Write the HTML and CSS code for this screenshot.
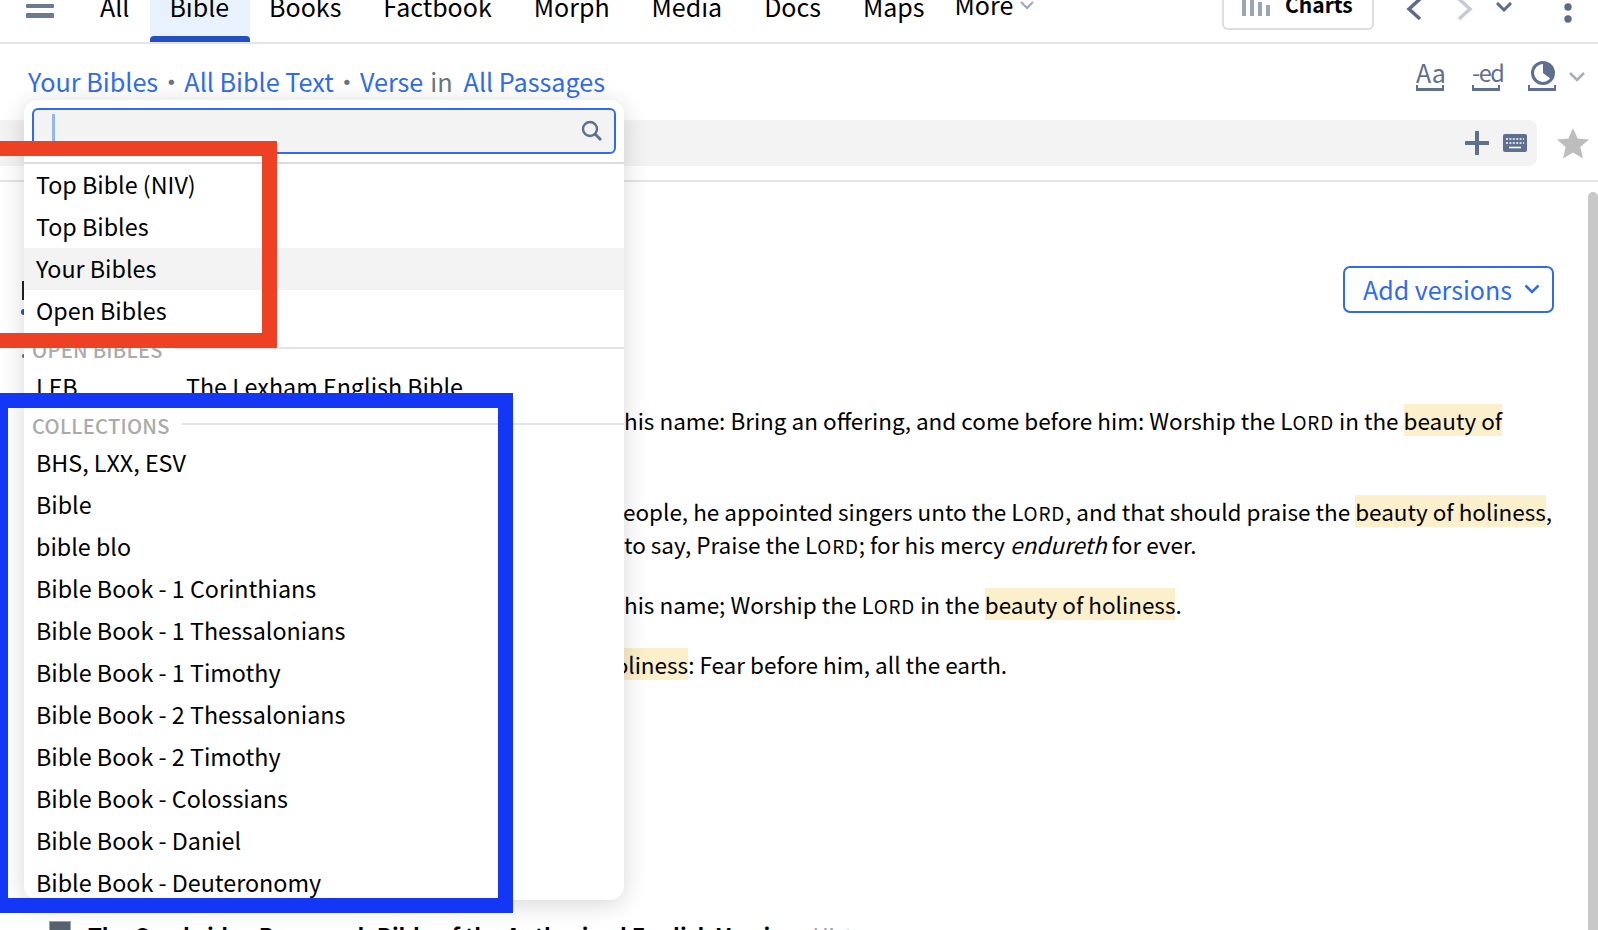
FILE: index.html
```html
<!DOCTYPE html>
<html lang="en">
<head>
<meta charset="utf-8">
<title>Bible search</title>
<link rel="stylesheet" href="styles.css">
</head>
<body>
<div class="page">
  <header class="topbar">
    <svg class="burger" width="28" height="18" viewBox="0 0 28 18"><rect y="0" width="28" height="4" rx="1" fill="#6b7a90"/><rect y="9" width="28" height="5" rx="1" fill="#6b7a90"/></svg>
    <nav class="tabs">
      <a class="tab">All</a>
      <a class="tab active">Bible</a>
      <a class="tab">Books</a>
      <a class="tab">Factbook</a>
      <a class="tab">Morph</a>
      <a class="tab">Media</a>
      <a class="tab">Docs</a>
      <a class="tab">Maps</a>
      <a class="tab more">More <svg width="16" height="10" viewBox="0 0 16 10"><path d="M2 2l6 6 6-6" fill="none" stroke="#9aa5b5" stroke-width="2"/></svg></a>
    </nav>
    <div class="tools">
      <button class="charts">
        <svg width="28" height="20" viewBox="0 0 28 20"><g fill="#9aa5b8"><rect x="0" width="4" height="20"/><rect x="8" width="4" height="20"/><rect x="16" y="6" width="4" height="14"/><rect x="24" y="9" width="4" height="11"/></g></svg>
        <span>Charts</span>
      </button>
      <svg class="back" width="16" height="24" viewBox="0 0 16 24"><path d="M14 2L3 12l11 10" fill="none" stroke="#5f6b85" stroke-width="3.5"/></svg>
      <svg class="fwd" width="16" height="24" viewBox="0 0 16 24"><path d="M2 2l11 10L2 22" fill="none" stroke="#c5cad3" stroke-width="3.5"/></svg>
      <svg class="hist" width="16" height="10" viewBox="0 0 16 10"><path d="M1 1l7 7 7-7" fill="none" stroke="#5f6b85" stroke-width="3"/></svg>
      <svg class="dots" width="8" height="20" viewBox="0 0 8 20"><circle cx="4" cy="4" r="3.7" fill="#5f6b85"/><circle cx="4" cy="16" r="3.7" fill="#5f6b85"/></svg>
    </div>
  </header>

  <section class="crumbs">
    <div class="path">
      <a>Your Bibles</a><i>•</i><a>All Bible Text</a><i>•</i><a>Verse</a><em>in</em><a>All Passages</a>
    </div>
    <div class="prefs">
      <span class="pref">Aa</span>
      <span class="pref ed">-ed</span>
      <span class="pref pie"><svg width="24" height="24" viewBox="0 0 24 24"><circle cx="12" cy="12" r="10.500" fill="#fff" stroke="#5f6f8f" stroke-width="3"/><path d="M12 12V1a11 11 0 0 1 8.500 17.500z" fill="#5f6f8f"/></svg></span>
      <svg class="prefdown" width="16" height="10" viewBox="0 0 16 10"><path d="M1 1l7 7 7-7" fill="none" stroke="#a6aebb" stroke-width="2.500"/></svg>
    </div>
  </section>

  <section class="searchrow">
    <div class="searchbar">
      <svg width="24" height="24" viewBox="0 0 24 24"><path d="M12 1v22M1 12h22" stroke="#5f6f8f" stroke-width="4" stroke-linecap="round"/></svg>
      <svg width="24" height="18" viewBox="0 0 24 18"><rect width="24" height="18" rx="2" fill="#5f6f8f"/><path d="M3 5h18M3 9h18" stroke="#fff" stroke-width="1.600" stroke-dasharray="2 1.400"/><path d="M6 13.500h12" stroke="#fff" stroke-width="1.600"/></svg>
    </div>
    <svg class="star" width="32" height="31" viewBox="0 0 32 31"><path d="M16 0l4.600 10.600 11.400 1-8.700 7.500 2.700 11.400-10-6.100-10 6.100 2.700-11.400L0 11.600l11.400-1z" fill="#bdbdbd"/></svg>
  </section>

  <main class="results">
    <div class="addrow">
      <button class="addversions">Add versions <svg width="16" height="10" viewBox="0 0 16 10"><path d="M1.500 1.500L8 8l6.500-6.500" fill="none" stroke="#2f6bef" stroke-width="2.500"/></svg></button>
    </div>
    <p class="line l1">his name: Bring an offering, and come before him: Worship the L<span class="sc">ORD</span> in the <mark>beauty of</mark></p>
    <p class="line l2">people, he appointed singers unto the L<span class="sc">ORD</span>, and that should praise the <mark>beauty of holiness</mark>,</p>
    <p class="line l3">to say, Praise the L<span class="sc">ORD</span>; for his mercy <i>endureth</i> for ever.</p>
    <p class="line l4">his name; Worship the L<span class="sc">ORD</span> in the <mark>beauty of holiness</mark>.</p>
    <p class="line l5"><mark>holiness</mark>: Fear before him, all the earth.</p>
    <div class="book">
      <span class="cover"></span>
      <b>The Cambridge Paragraph Bible of the Authorized English Version</b>
      <span class="hist-link">Hist</span>
    </div>
  </main>

  <span class="peek bar"></span>
  <span class="peek dot"></span>
  <span class="peek dot2"></span>

  <aside class="popup">
    <div class="inputwrap">
      <div class="input">
        <span class="caret"></span>
        <svg width="22" height="22" viewBox="0 0 22 22"><circle cx="9" cy="9" r="7" fill="none" stroke="#5f6f8f" stroke-width="2.400"/><path d="M14 14l6 6" stroke="#5f6f8f" stroke-width="2.800"/></svg>
      </div>
    </div>
    <ul class="opts first">
      <li>Top Bible (NIV)</li>
      <li>Top Bibles</li>
      <li class="hover">Your Bibles</li>
      <li>Open Bibles</li>
    </ul>
    <h4 class="group open"><span>OPEN BIBLES</span></h4>
    <ul class="opts">
      <li class="pair"><span>LEB</span><span>The Lexham English Bible</span></li>
    </ul>
    <h4 class="group coll"><span>COLLECTIONS</span></h4>
    <ul class="opts">
      <li>BHS, LXX, ESV</li>
      <li>Bible</li>
      <li>bible blo</li>
      <li>Bible Book - 1 Corinthians</li>
      <li>Bible Book - 1 Thessalonians</li>
      <li>Bible Book - 1 Timothy</li>
      <li>Bible Book - 2 Thessalonians</li>
      <li>Bible Book - 2 Timothy</li>
      <li>Bible Book - Colossians</li>
      <li>Bible Book - Daniel</li>
      <li>Bible Book - Deuteronomy</li>
    </ul>
  </aside>

  <div class="mark-red"></div>
  <div class="mark-blue"></div>
</div>
</body>
</html>
```
FILE: styles.css
```css
* { box-sizing: border-box; }
html, body { margin: 0; padding: 0; background: #fff; }
body { font-family: "Noto Sans CJK SC", "Noto Sans", sans-serif; color: #000; overflow: hidden; }
.page { position: relative; width: 1598px; height: 930px; overflow: hidden; background: #fff; }
p, ul, h4 { margin: 0; padding: 0; }
ul { list-style: none; }
button { font: inherit; background: none; cursor: pointer; }

.topbar { height: 44px; border-bottom: 2px solid #e4e4e4; display: flex; align-items: flex-start; padding-left: 26px; position: relative; }
.burger { margin-top: 4px; flex: none; }
.tabs { display: flex; margin-left: 25px; font-size: 25px; line-height: 30px; height: 42px; }
.tab { display: block; padding: 0 21px; margin-top: -9px; height: 51px; color: #000; white-space: nowrap; }
.tab.active { position: relative; background: #e8f2fd; padding-left: 19px; margin-right: -2px; }
.tab.active::after { content: ""; position: absolute; left: 0; right: 0; bottom: 0; height: 6px; background: #2350c0; border-radius: 4px 4px 0 0; }
.tab.more { margin-top: -11px; margin-left: -12px; }
.tab.more svg { vertical-align: 5px; }
.tools { position: absolute; right: 0; top: 0; height: 30px; width: 376px; display: flex; align-items: flex-start; }
.charts { width: 152px; height: 30px; border: 2px solid #dddddd; border-top: 0; border-radius: 0 0 6px 6px; display: flex; align-items: flex-start; padding: 0 0 0 18px; font-size: 21px; font-weight: 700; line-height: 24px; color: #000; }
.charts svg { margin-top: -4px; flex: none; }
.charts span { margin: -8px 0 0 15px; }
.back { margin: -3px 0 0 32px; }
.fwd { margin: -3px 0 0 35px; }
.hist { margin: 2px 0 0 23px; }
.dots { margin: 3px 0 0 52px; }

.crumbs { height: 60px; display: flex; justify-content: space-between; padding: 0 13px 0 28px; }
.path { font-size: 25.200px; line-height: 34px; padding-top: 20px; color: #2f6bef; display: flex; white-space: nowrap; }
.path i { font-style: normal; color: #6b7280; margin: 0 .5px; }
.path em { font-style: normal; color: #6b7280; margin: 0 11px 0 7px; }
.prefs { display: flex; align-items: flex-start; padding-top: 13px; color: #5f6f8f; font-size: 25px; }
.pref { position: relative; width: 28px; height: 34px; line-height: 30px; border-bottom: 3px solid #5f6f8f; text-align: center; margin-left: 28px; display: block; white-space: nowrap; }
.pref::after { content: ""; position: absolute; left: 0; right: 0; bottom: 0; height: 3px; border-left: 2px solid #5f6f8f; border-right: 2px solid #5f6f8f; }
.pref.ed { font-size: 23.500px; letter-spacing: -1.500px; }
.pie svg { margin: 4px 0 0 3px; display: block; }
.prefdown { margin: 15px 0 0 13px; }

.searchrow { height: 78px; border-bottom: 2px solid #e4e4e4; display: flex; padding-top: 16px; }
.searchbar { width: 1537px; height: 46px; background: #f3f3f3; border-radius: 0 8px 8px 0; display: flex; align-items: center; justify-content: flex-end; gap: 14px; padding-right: 10px; }
.star { margin: 8px 0 0 20px; }

.results { position: relative; padding-left: 624px; font-size: 22.500px; line-height: 33px; }
.results::after { content: ""; position: absolute; right: 0; top: 10px; width: 10px; height: 760px; background: #c8c8c8; border-radius: 5px 5px 0 0; }
.addrow { height: 222px; padding-top: 84px; display: flex; justify-content: flex-end; padding-right: 44px; }
.addversions { width: 211px; height: 47px; border: 2px solid #2f6bef; border-radius: 7px; color: #2f6bef; font-size: 25px; line-height: 38px; display: flex; align-items: center; gap: 12px; padding: 0 0 2px 18px; }
.line { white-space: nowrap; }
.sc { font-size: 84%; letter-spacing: .8px; }
mark { background: #fcefcb; color: inherit; }
.l1 { height: 91px; }
.l2 { height: 33px; margin-left: -15px; }
.l3 { height: 60px; }
.l4 { height: 60px; }
.l5 { margin-left: -23px; height: 273px; }
.book { margin-left: -575px; display: flex; align-items: flex-start; font-size: 22.200px; line-height: 28px; height: 28px; white-space: nowrap; }
.cover { width: 22px; height: 28px; background: #55636e; border: 1px solid #9aa3ab; margin: 0 17px 0 0; flex: none; }
.book b { font-weight: 700; }
.hist-link { color: #9aa5b5; margin-left: 14px; }

.peek { position: absolute; display: block; }
.peek.bar { left: 22px; top: 281px; width: 2px; height: 19px; background: #222; }
.peek.dot { left: 21px; top: 309px; width: 6px; height: 6px; border-radius: 50%; background: #2350c0; }
.peek.dot2 { left: 22px; top: 354px; width: 3px; height: 4px; border-radius: 50%; background: #5f6f8f; }

.popup { position: absolute; left: 24px; top: 100px; width: 600px; height: 800px; background: #fff; border-radius: 14px; box-shadow: 0 4px 24px rgba(0,0,0,.16); overflow: hidden; font-size: 23.300px; line-height: 40px; }
.inputwrap { height: 64px; padding: 8px 8px 0 8px; border-bottom: 2px solid #dcdcdc; }
.input { height: 46px; background: #f3f3f3; border: 2px solid #2f6bef; border-radius: 6px; display: flex; justify-content: space-between; align-items: center; padding: 0 11px 0 18px; }
.caret { width: 3px; height: 30px; background: #8fb8f5; margin-top: -4px; }
.opts li { height: 42px; padding-left: 12px; white-space: nowrap; }
.opts li.hover { background: #f3f3f3; }
.pair { display: flex; }
.pair span:first-child { width: 150px; }
.group { font-size: 20px; font-weight: 500; color: #aaaaaa; line-height: 24px; height: 28px; padding-left: 8px; display: flex; align-items: flex-start; letter-spacing: .3px; }
.group::after { content: ""; flex: 1; height: 2px; background: #e4e4e4; margin: 9px 0 0 12px; }
.group.open { margin-top: 6px; }
.group.coll { margin-top: 6px; }

.mark-red { position: absolute; left: -30px; top: 141px; width: 307px; height: 207px; border: 15px solid #ee4023; }
.mark-blue { position: absolute; left: -7px; top: 393px; width: 520px; height: 520px; border: 15px solid #1436f5; }
```
